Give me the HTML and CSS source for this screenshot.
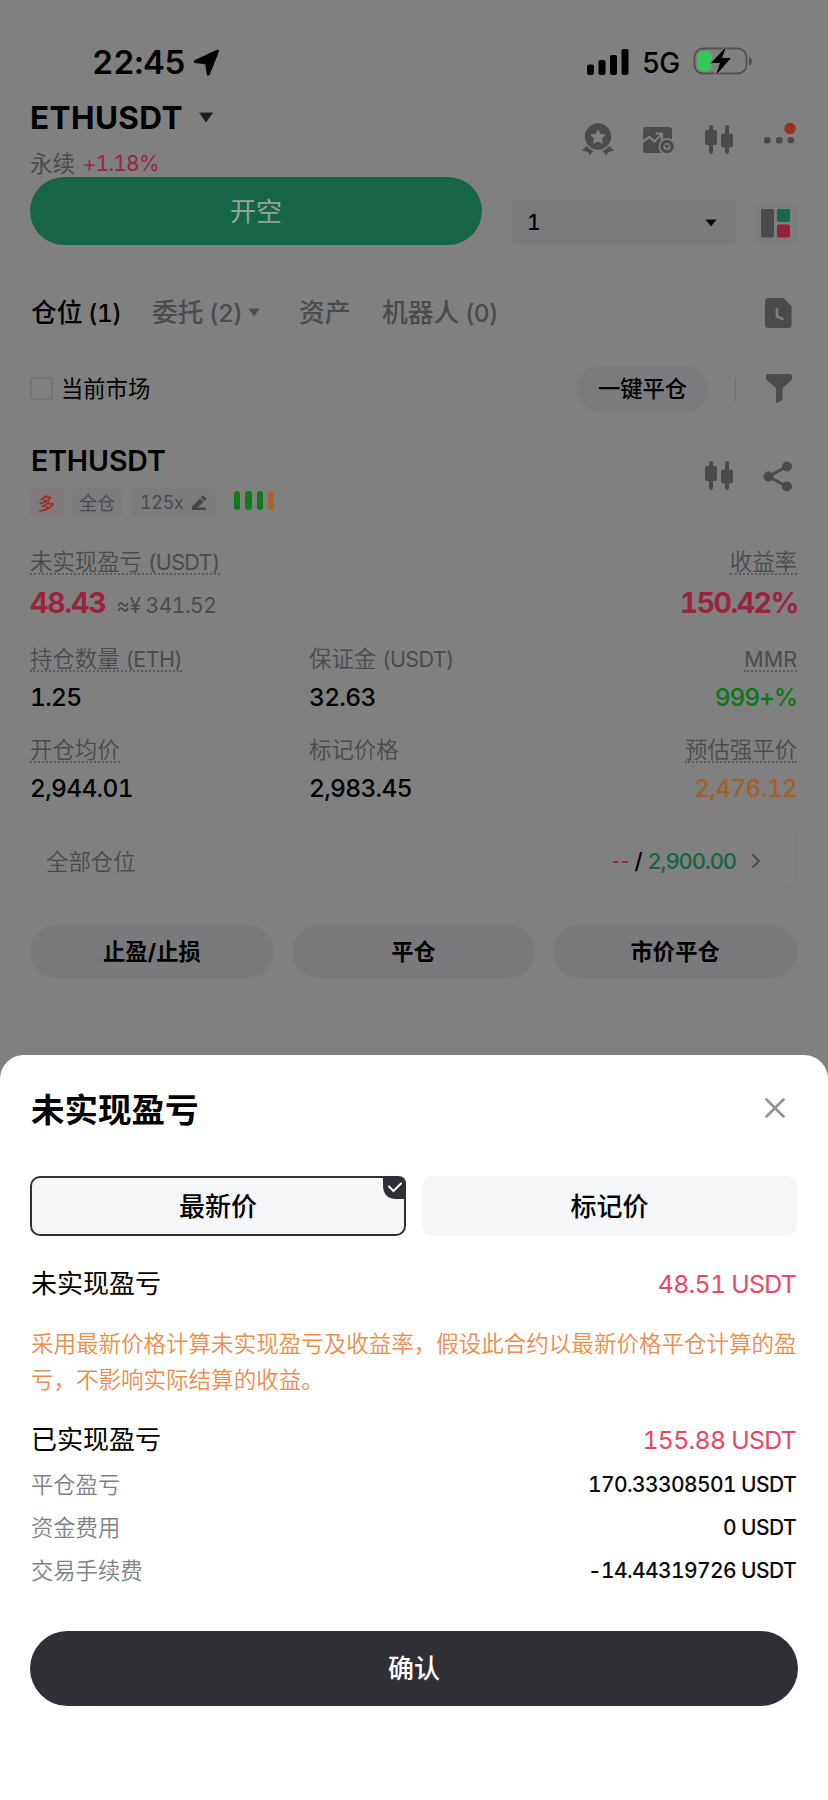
FILE: index.html
```html
<!DOCTYPE html>
<html lang="zh-CN">
<head>
<meta charset="utf-8">
<title>ETHUSDT</title>
<link rel="stylesheet" href="styles.css">
</head>
<body>
<svg class="defs" width="0" height="0" aria-hidden="true">
  <symbol id="candles" viewBox="0 0 30 30"><path fill="currentColor" d="M5 2a2 2 0 0 1 4 0v3h2q2 0 2 2v11q0 2-2 2H9v7a2 2 0 0 1-4 0v-7H3q-2 0-2-2V7q0-2 2-2h2zM21 2a2 2 0 0 1 4 0v6.500h2q2 0 2 2v10q0 2-2 2h-2V27a2 2 0 0 1-4 0v-4.500h-2q-2 0-2-2v-10q0-2 2-2h2z"/></symbol>
</svg>
<main class="page">
  <div class="status">
    <span class="time">22:45</span>
    <svg class="loc" width="27" height="28" viewBox="0 0 27 28"><path d="M24.500 2.200L15.300 25.200 13.600 14 2.200 12.500z" stroke="#000" stroke-width="3" stroke-linejoin="round"/></svg>
    <svg class="signal" width="42" height="26" viewBox="0 0 42 26"><rect y="15.500" width="7" height="10.500" rx="2"/><rect x="11.500" y="11" width="7" height="15" rx="2"/><rect x="23" y="6" width="7" height="20" rx="2"/><rect x="34.500" width="7" height="26" rx="2"/></svg>
    <span class="net">5G</span>
    <svg class="battery" width="60" height="30" viewBox="0 0 60 30"><rect x="1.500" y="2.500" width="52" height="25" rx="8.500" fill="none" stroke="#525252" stroke-width="1.800"/><path d="M56 10.500q3 1 3 4.500t-3 4.500z" fill="#525252"/><rect x="4" y="5" width="15" height="20" rx="6" fill="#35c759"/><path d="M33 1L18 17h9l-4 12 15-17h-9z" stroke="#808080" stroke-width="2.500" paint-order="stroke" stroke-linejoin="round"/></svg>
  </div>

  <header class="head">
    <div>
      <div class="pair"><span>ETHUSDT</span><svg width="16" height="11" viewBox="0 0 16 11"><path fill="#1e1e20" d="M1 .5h14L8 10.500z"/></svg></div>
      <div class="sub"><span class="zh">永续</span><span class="chg">+1.18%</span></div>
    </div>
    <div class="head-icons">
      <svg class="medal" width="34" height="34" viewBox="0 0 34 34"><circle cx="17" cy="14.500" r="13.200" fill="#494b4d"/><path fill="#808080" stroke="#808080" stroke-linejoin="round" d="M17 8l2.200 4.200 4.800.8-3.400 3.400.7 4.800-4.300-2.100-4.300 2.100.7-4.800L10 13l4.800-.8z"/><path fill="#494b4d" d="M5.500 24q3.500 3.500 7 5l-4 4.500-1.500-3.500-6-1.200zM28.500 24q-3.500 3.500-7 5l4 4.500 1.500-3.500 6-1.200z"/></svg>
      <svg class="chart" width="33" height="28" viewBox="0 0 33 28"><rect x="1" y="1" width="29" height="26" rx="3.500" fill="#494b4d"/><path d="M0 16l7.500-5 5 4.500L20 8M13.500 7.500H20v6.500" fill="none" stroke="#808080" stroke-width="2.200"/><circle cx="25" cy="20.500" r="8.500" fill="#808080"/><circle cx="25" cy="20.500" r="5.200" fill="none" stroke="#494b4d" stroke-width="3.200"/><path fill="#494b4d" d="M22 18.700h6l-3 4.300z"/></svg>
      <svg class="ic" width="30" height="30"><use href="#candles"/></svg>
      <svg class="dots" width="34" height="30" viewBox="0 0 34 30"><g fill="#494b4d"><rect x="1" y="17" width="6.500" height="6.500" rx="2"/><rect x="13" y="17" width="6.500" height="6.500" rx="2"/><rect x="24.500" y="17" width="6.500" height="6.500" rx="3"/></g><circle cx="27" cy="8.500" r="5.700" fill="#9a2e23"/></svg>
    </div>
  </header>

  <div class="trade">
    <div class="short">开空</div>
    <div class="select"><span>1</span><svg width="12" height="8" viewBox="0 0 12 8"><path fill="#0c0c0d" d="M.5.500h11L6 7.500z"/></svg></div>
    <div class="layout"><svg width="30" height="29" viewBox="0 0 30 29"><rect width="13" height="28.500" rx="2" fill="#4a4a4c"/><rect x="16" width="13" height="13" rx="2" fill="#146b4a"/><rect x="16" y="15.500" width="13" height="13" rx="2" fill="#93213c"/></svg></div>
  </div>

  <nav class="tabs">
    <span class="tab on">仓位<i>(1)</i></span>
    <span class="tab t2">委托<i>(2)</i><svg width="12" height="9" viewBox="0 0 12 9"><path fill="#494b4d" d="M.5.500h11L6 8.500z"/></svg></span>
    <span class="tab t3">资产</span>
    <span class="tab t4">机器人<i>(0)</i></span>
    <svg class="file" width="27" height="30" viewBox="0 0 27 30"><path fill="#494b4d" d="M3 0h15.500L26.500 8v19q0 3-3 3H3q-3 0-3-3V3q0-3 3-3z"/><path d="M12 11v7.500l5.500 2.500" fill="none" stroke="#7e8083" stroke-width="2.600" stroke-linecap="round"/></svg>
  </nav>

  <div class="filter">
    <span class="box"></span><span class="cur">当前市场</span>
    <span class="closeall">一键平仓</span>
    <span class="sep"></span>
    <svg width="26" height="30" viewBox="0 0 26 30"><path fill="#494b4d" d="M2 0h22q2 0 2 2v3.500L16.500 14v12L10 29.500V14L0 5.500V2q0-2 2-2z"/></svg>
  </div>

  <section class="pos">
    <div class="pos-head">
      <h2>ETHUSDT</h2>
      <div class="tags">
        <span class="tag long">多</span><span class="tag">全仓</span>
        <span class="tag lev">125x<svg width="16" height="16" viewBox="0 0 16 16"><path fill="#434547" d="M1 11.500L9 3.500l3.500 3.500-6 5.500H15V15H1zM10 2.500l2-2 3.500 3.500-2 2z"/></svg></span>
        <span class="risk"><b></b><b></b><b></b><b class="o"></b></span>
      </div>
      <div class="pos-icons">
        <svg class="ic" width="30" height="30"><use href="#candles"/></svg>
        <svg class="ic" width="30" height="31" viewBox="0 0 30 31"><g fill="#494b4d"><circle cx="5.500" cy="15.500" r="5"/><circle cx="24" cy="5.500" r="5"/><circle cx="24" cy="25.500" r="5"/></g><path d="M24 5.500L5.500 15.500 24 25.500" fill="none" stroke="#494b4d" stroke-width="3"/></svg>
      </div>
    </div>

    <div class="pnl">
      <div><span class="lab dot">未实现盈亏<i>(USDT)</i></span>
        <div class="big"><strong>48.43</strong><span class="approx">≈¥<em>341.52</em></span></div></div>
      <div class="r"><span class="lab dot">收益率</span><div class="big roi"><strong>150.42%</strong></div></div>
    </div>
    <div class="grid g1">
      <div><span class="lab dot">持仓数量<i>(ETH)</i></span><div class="val">1.25</div></div>
      <div><span class="lab">保证金<i>(USDT)</i></span><div class="val">32.63</div></div>
      <div class="r"><span class="lab dot mmr">MMR</span><div class="val green">999+%</div></div>
    </div>
    <div class="grid g2">
      <div><span class="lab dot">开仓均价</span><div class="val">2,944.01</div></div>
      <div><span class="lab">标记价格</span><div class="val">2,983.45</div></div>
      <div class="r"><span class="lab dot">预估强平价</span><div class="val orange">2,476.12</div></div>
    </div>
    <div class="tpsl">
      <span class="all">全部仓位</span>
      <span class="tp"><span class="red">--</span><span class="slash">/</span><span class="teal">2,900.00</span><svg width="10" height="16" viewBox="0 0 10 16"><path d="M1.500 1.500L8 8l-6.500 6.500" fill="none" stroke="#494b4d" stroke-width="2"/></svg></span>
    </div>
    <div class="acts"><span>止盈/止损</span><span>平仓</span><span>市价平仓</span></div>
  </section>

  <section class="sheet">
    <div class="sheet-head"><h1>未实现盈亏</h1><svg width="20" height="20" viewBox="0 0 20 20"><path d="M1.500 1.500l17 17M18.500 1.500l-17 17" stroke="#919293" stroke-width="2.700" stroke-linecap="round"/></svg></div>
    <div class="opts">
      <div class="opt sel">最新价<svg class="check" width="23" height="23" viewBox="0 0 23 23"><path fill="#2f3035" d="M0 0h15q8 0 8 8v15H12Q0 22 0 9z"/><path d="M6 10.500l4.500 4.500 7.500-7.500" fill="none" stroke="#fff" stroke-width="2" stroke-linecap="round"/></svg></div>
      <div class="opt">标记价</div>
    </div>
    <div class="row"><span class="name">未实现盈亏</span><span class="usd">48.51 USDT</span></div>
    <p class="note">采用最新价格计算未实现盈亏及收益率，假设此合约以最新价格平仓计算的盈亏，不影响实际结算的收益。</p>
    <div class="row row2"><span class="name">已实现盈亏</span><span class="usd">155.88 USDT</span></div>
    <div class="row small"><span>平仓盈亏</span><span>170.33308501 USDT</span></div>
    <div class="row small"><span>资金费用</span><span>0 USDT</span></div>
    <div class="row small"><span>交易手续费</span><span>-14.44319726 USDT</span></div>
    <div class="confirm">确认</div>
  </section>
</main>
</body>
</html>
```
FILE: styles.css
```css
* { box-sizing: border-box; }
body { margin: 0; background: #808080; color: #000; font-family: Inter, "Noto Sans CJK SC", sans-serif; font-variant-numeric: tabular-nums; }
svg { display: block; flex: none; }
i, em { font-style: normal; }
h1, h2, p { margin: 0; }
.defs { position: absolute; }
.page { width: 828px; height: 1800px; overflow: hidden; display: flex; flex-direction: column; }

.status { height: 95px; padding: 41.500px 0 0 92px; display: flex; align-items: flex-start; line-height: 40px; white-space: nowrap; }
.time { width: 101px; font-size: 33px; font-weight: 600; letter-spacing: -.1px; }
.loc { margin-top: 7px; }
.signal { margin: 7px 0 0 367px; }
.net { width: 37px; margin-left: 13px; font-size: 28px; font-weight: 500; line-height: 42px; letter-spacing: -1px; }
.battery { margin: 4.500px 0 0 14px; }

.head { height: 82px; padding: 0 31px 0 30px; display: flex; justify-content: space-between; }
.pair { display: flex; align-items: center; gap: 15.500px; height: 45px; font-size: 31.500px; font-weight: 700; letter-spacing: .4px; }
.sub { display: flex; gap: 8px; margin-top: 6.500px; font-size: 21px; line-height: 34px; height: 30px; color: #494b4d; }
.sub .zh { font-size: 22.400px; }
.chg { color: #982440; letter-spacing: -.8px; }
.head-icons { display: flex; padding-top: 27px; align-items: flex-start; }
.medal { margin-right: -1px; position: relative; left: -1px; }
.ic { color: #494b4d; }
.chart { margin: 4px 0 0 27px; }
.head-icons .ic { margin: 3px 0 0 29px; }
.dots { margin: -2px 0 0 29px; }

.trade { height: 68px; padding-left: 30px; display: flex; align-items: flex-start; }
.short { width: 452px; height: 68px; border-radius: 34px; background: #166546; color: #93a69c; font-size: 26px; line-height: 69px; text-align: center; }
.select { margin: 23px 0 0 30px; width: 224px; height: 45px; padding: 0 19px 0 15px; background: #7b7b7e; border-radius: 3px; display: flex; align-items: center; justify-content: space-between; font-size: 21px; font-weight: 500; }
.layout { margin: 26px 0 0 20px; width: 41px; height: 41px; background: #7d7d7f; border-radius: 4px; padding: 6px 0 0 5px; }

.tabs { height: 117px; padding: 41.500px 36px 0 31px; display: flex; font-size: 25.800px; line-height: 52px; color: #494b4d; white-space: nowrap; }
.tab { display: flex; align-items: center; height: 52px; font-weight: 500; }
.tab i { margin-left: 5.500px; font-size: 24.500px; letter-spacing: -.7px; }
.tab svg { margin-left: 6px; }
.on { color: #000; width: 121px; }
.t2 { width: 147px; }
.t3 { width: 83px; }
.file { margin: 11px 0 0 auto; }

.filter { height: 51px; padding: 3px 36px 0 30px; display: flex; align-items: center; font-size: 22.300px; white-space: nowrap; }
.box { width: 23px; height: 23px; border: 2px solid #747577; border-radius: 3px; margin: -2px 8px 0 0; }
.cur { margin-top: -4px; }
.closeall { margin-left: auto; width: 131px; height: 46px; border-radius: 23px; background: #7b7b7e; text-align: center; line-height: 46px; font-weight: 500; }
.sep { width: 1px; height: 24px; background: #737374; margin: 0 30px 0 27px; }

.pos { height: 642px; padding: 0 31px 0 30px; }
.pos-head { position: relative; padding-top: 28px; height: 131px; }
h2 { font-size: 28.500px; font-weight: 600; line-height: 40px; letter-spacing: -.1px; padding-left: 1px; }
.tags { display: flex; gap: 9px; margin-top: 7px; font-size: 18px; line-height: 32px; color: #494b4d; }
.tag { height: 30px; padding: 0 7px; background: #7c7c7e; border-radius: 3px; }
.long { width: 33px; padding: 0 8px; color: #a02a2b; background: #807a7a; font-size: 17px; font-weight: 500; }
.lev { width: 85px; display: flex; align-items: center; gap: 7px; padding-left: 9px; letter-spacing: -.3px; }
.risk { display: flex; gap: 5px; padding: 3px 0 0 9px; }
.risk b { width: 6.300px; height: 19px; border-radius: 3px; background: #127a18; }
.risk .o { background: #ac6431; }
.pos-icons { position: absolute; right: 4px; top: 47px; display: flex; gap: 29px; }
.pos-icons .ic { margin-top: 1px; }

.lab { display: block; width: fit-content; height: 31px; padding-top: 7px; font-size: 22.400px; line-height: 22px; color: #494b4d; white-space: nowrap; font-weight: 350; }
.r .lab { margin-left: auto; }
.r { text-align: right; }
.lab i { font-size: 21.500px; margin-left: 6px; font-weight: 400; letter-spacing: -.6px; }
.dot { border-bottom: 2px dotted #585a5c; }
.mmr { font-size: 21.500px; font-weight: 400; }
.pnl { display: flex; justify-content: space-between; height: 97px; }
.big { line-height: 36px; display: flex; align-items: baseline; margin-top: 10px; color: #9a2440; font-size: 28.500px; letter-spacing: -1.200px; }
.big strong { font-weight: 650; }
.roi { justify-content: flex-end; letter-spacing: -1.500px; margin-right: -1px; }
.approx { font-size: 21px; color: #494b4d; margin-left: 11px; letter-spacing: -.5px; }
.approx em { margin-left: 5px; }
.grid { display: grid; grid-template-columns: 279px 279px 1fr; height: 91px; }
.val { font-size: 24.500px; font-weight: 500; line-height: 34px; margin-top: 8px; letter-spacing: -.7px; }
.green { color: #0c761a; letter-spacing: -1.100px; }
.orange { color: #a46029; }
.tpsl { height: 65px; padding: 10px 35px 0 15px; display: flex; align-items: center; justify-content: space-between; border: 1px solid #7e7e7e; border-top: 0; border-radius: 8px; }
.all { font-size: 22.400px; font-weight: 350; color: #494b4d; }
.tp { display: flex; align-items: center; font-size: 22px; font-weight: 500; letter-spacing: -1.100px; padding-top: 1px; }
.tp svg { margin-left: 15px; }
.red { color: #9a2440; font-family: "Liberation Sans", sans-serif; font-size: 23px; letter-spacing: 1.500px; }
.slash { margin: 0 6px 0 4px; }
.teal { color: #156545; }
.acts { display: grid; grid-template-columns: repeat(3, 1fr); gap: 18px; margin-top: 37px; }
.acts span { height: 53px; line-height: 54px; border-radius: 27px; background: #7a7a7d; text-align: center; font-size: 22.300px; font-weight: 700; }

.sheet { height: 745px; background: #fff; border-radius: 24px 24px 0 0; padding: 0 30px; }
.sheet-head { height: 121px; display: flex; align-items: flex-start; justify-content: space-between; padding: 30px 13px 0 1px; }
.sheet-head svg { margin-top: 13px; }
h1 { font-size: 33.500px; line-height: 50px; font-weight: 700; }
.opts { display: grid; grid-template-columns: 376px 375px; gap: 16px; }
.opt { position: relative; height: 60px; line-height: 62px; border-radius: 10px; background: #f4f6f8; text-align: center; font-size: 26px; font-weight: 500; }
.sel { border: 2px solid #303135; line-height: 58px; }
.check { position: absolute; right: -2px; top: -2px; }
.row { display: flex; justify-content: space-between; align-items: center; height: 46px; margin-top: 25px; font-size: 26px; padding: 0 2px 0 1px; }
.name { margin-top: -6px; }
.usd { font-size: 24.800px; color: #e84764; letter-spacing: -.7px; margin-top: -1px; }
.note { color: #ec8c4d; font-size: 22.530px; line-height: 35.500px; margin: 19px -4px 0 1px; font-weight: 350; }
.row2 { margin-top: 20px; }
.row.small { height: 43px; margin-top: 0; font-size: 22.300px; color: #7d8287; }
.small span:first-child { font-weight: 350; margin-top: -3px; }
.small span:last-child { font-size: 21px; font-weight: 500; color: #0a0b10; letter-spacing: -.6px; }
.confirm { margin-top: 39px; height: 75px; border-radius: 38px; background: #2f3035; color: #fff; text-align: center; line-height: 75px; font-size: 26px; font-weight: 500; }
```
